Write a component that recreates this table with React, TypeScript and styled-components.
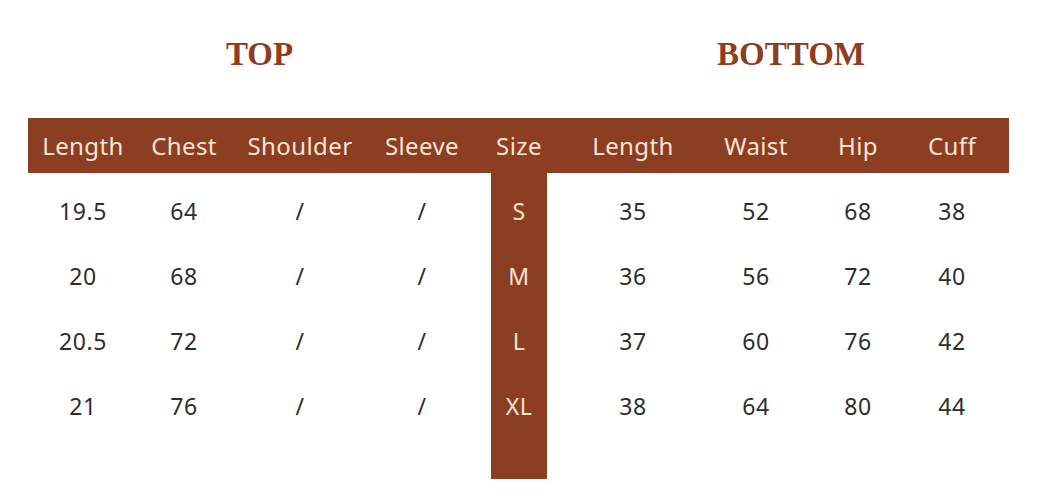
import React from "react";
import styled, { createGlobalStyle } from "styled-components";

const BRAND = "#8b3e22";

const GlobalStyle = createGlobalStyle`
  html, body {
    margin: 0;
    padding: 0;
    background: #ffffff;
  }
  body {
    font-family: "Noto Sans", "Open Sans", sans-serif;
  }
`;

// column widths, left to right; the 5th is a blank gap before Size
const COLS = [110, 92, 140, 104, 17, 56, 172, 74, 130, 58, 28];
const SIZE_LEFT = COLS.slice(0, 5).reduce((a, b) => a + b, 0);
const SIZE_RIGHT = SIZE_LEFT + COLS[5];
const TABLE_W = COLS.reduce((a, b) => a + b, 0);

const top = [
  ["19.5", "64", "/", "/"],
  ["20", "68", "/", "/"],
  ["20.5", "72", "/", "/"],
  ["21", "76", "/", "/"],
];
const sizes = ["S", "M", "L", "XL"];
const bottom = [
  ["35", "52", "68", "38"],
  ["36", "56", "72", "40"],
  ["37", "60", "76", "42"],
  ["38", "64", "80", "44"],
];

const Page = styled.div`
  width: 1060px;
  height: 500px;
  padding: 36px 0 0 28px;
  box-sizing: border-box;
`;

const Titles = styled.div`
  display: flex;
  height: 82px;
`;

const Title = styled.h2<{ $width: number; $offset?: number }>`
  margin: 0 0 0 ${(p) => p.$offset ?? 0}px;
  width: ${(p) => p.$width}px;
  text-align: center;
  font-family: "Liberation Serif", "Times New Roman", serif;
  font-weight: 700;
  font-size: 33px;
  line-height: 36px;
  color: #8d3d21;
`;

const Row = styled.div`
  display: grid;
  grid-template-columns: ${COLS.map((c) => c + "px").join(" ")};
  width: ${TABLE_W}px;
`;

const HeadRow = styled(Row)`
  height: 55px;
  background: ${BRAND};
`;

const Body = styled.div`
  width: ${TABLE_W}px;
  padding: 5px 0 41px;
  background: linear-gradient(
    to right,
    transparent ${SIZE_LEFT}px,
    ${BRAND} ${SIZE_LEFT}px,
    ${BRAND} ${SIZE_RIGHT}px,
    transparent ${SIZE_RIGHT}px
  );
`;

const BodyRow = styled(Row)`
  height: 65px;
`;

const Cell = styled.div<{ $head?: boolean; $size?: boolean }>`
  display: flex;
  align-items: center;
  justify-content: center;
  white-space: nowrap;
  font-size: ${(p) => (p.$head ? 24 : 23)}px;
  letter-spacing: ${(p) => (p.$head ? 0.4 : 0.6)}px;
  color: ${(p) => (p.$head || p.$size ? "#fbe4d4" : "#2e2e2e")};
`;

const headers = ["Length", "Chest", "Shoulder", "Sleeve", "", "Size", "Length", "Waist", "Hip", "Cuff", ""];

export default function App() {
  return (
    <Page>
      <GlobalStyle />
      <Titles>
        <Title $width={SIZE_LEFT}>TOP</Title>
        <Title $width={488} $offset={COLS[5]}>
          BOTTOM
        </Title>
      </Titles>
      <HeadRow>
        {headers.map((h, i) => (
          <Cell key={i} $head>
            {h}
          </Cell>
        ))}
      </HeadRow>
      <Body>
        {sizes.map((s, r) => (
          <BodyRow key={s}>
            {top[r].map((v, i) => (
              <Cell key={"t" + i}>{v}</Cell>
            ))}
            <Cell />
            <Cell $size>{s}</Cell>
            {bottom[r].map((v, i) => (
              <Cell key={"b" + i}>{v}</Cell>
            ))}
            <Cell />
          </BodyRow>
        ))}
      </Body>
    </Page>
  );
}
